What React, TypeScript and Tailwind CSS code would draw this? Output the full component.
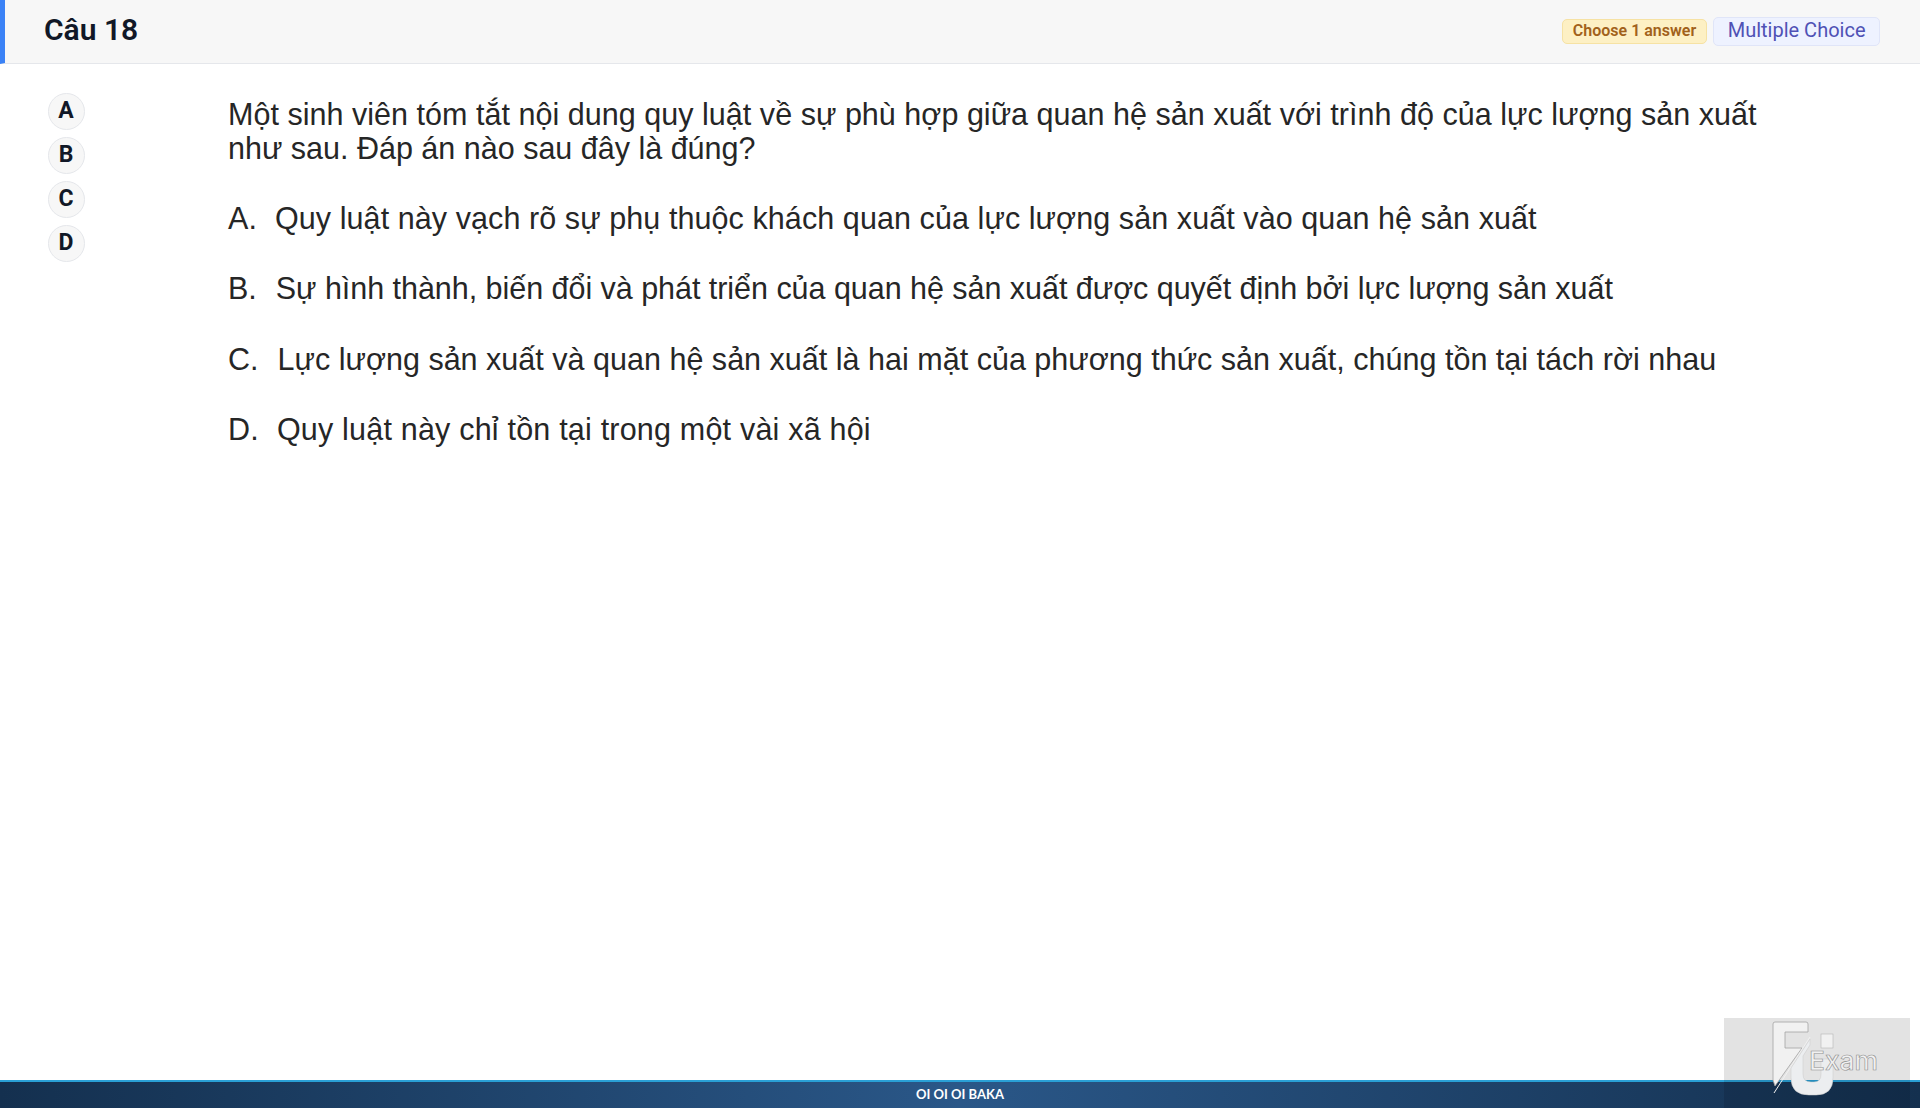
const sans = "font-['Liberation_Sans',Arial,sans-serif]";

const letters = ['A', 'B', 'C', 'D'];

const options = [
  { key: 'A.', line: 'tracking-[0.08px]', gap: 'ml-[18px]', text: 'Quy luật này vạch rõ sự phụ thuộc khách quan của lực lượng sản xuất vào quan hệ sản xuất' },
  { key: 'B.', line: 'tracking-[-0.035px]', gap: 'ml-[19px]', text: 'Sự hình thành, biến đổi và phát triển của quan hệ sản xuất được quyết định bởi lực lượng sản xuất' },
  { key: 'C.', line: 'tracking-[0.015px]', gap: 'ml-[19px]', text: 'Lực lượng sản xuất và quan hệ sản xuất là hai mặt của phương thức sản xuất, chúng tồn tại tách rời nhau' },
  { key: 'D.', line: 'tracking-[0.2px]', gap: 'ml-[18px]', text: 'Quy luật này chỉ tồn tại trong một vài xã hội' },
];

function Logo() {
  return (
    <div className="absolute right-[10px] bottom-0 w-[186px] h-[90px] bg-black/[0.11]">
      <svg width="186" height="90" viewBox="0 0 186 90" fill="none">
        {/* F */}
        <path d="M49 6 Q49 4 51 4 H82 Q84 4 84 6 V14 H61 V30 H78 L51 68 L49 62 Z" fill="#f1f1f1" stroke="#a3a3a3" strokeWidth="0.8" />
        {/* slash */}
        <path d="M86 19 L50 75" stroke="#f1f1f1" strokeWidth="1" />
        {/* U */}
        <path d="M86 21 L67 50 V60 Q67 77 85 77 H92 Q109 77 109 60 V41 H97 V56 Q97 64 90 64 H87 Q79 64 79 56 V38 L86 27 Z" fill="#eceef0" stroke="#c8c8c8" strokeWidth="0.5" />
        <rect x="97" y="16" width="12" height="14" fill="#f1f1f1" stroke="#b5b5b5" strokeWidth="0.6" />
        <text x="85" y="52" fontFamily="'Inter', sans-serif" fontSize="26" fontWeight="500" fill="#f1f1f1" stroke="#8f8f8f" strokeWidth="0.6" textLength="69" lengthAdjust="spacingAndGlyphs">Exam</text>
      </svg>
    </div>
  );
}

export default function App() {
  return (
    <div className="relative min-h-[1108px] bg-white flex flex-col overflow-hidden">
      <header className="h-[64px] flex items-center justify-between bg-[#f7f7f7] border-l-[5px] border-l-[#3b82f6] border-b border-b-[#e5e7eb] pl-[39px] pr-[40px] font-['Roboto',sans-serif]">
        <h1 className="text-[30px] font-semibold text-[#111827] leading-none -mt-[4px]">Câu 18</h1>
        <div className="flex items-center gap-[6px]">
          <span className="h-[25px] flex items-center px-[10px] pb-[2px] rounded-[5px] bg-[#fdf0c4] border border-[#f6e2a4] text-[#a1611b] text-[16px] font-semibold">Choose 1 answer</span>
          <span className="h-[29px] flex items-center px-[13.5px] pb-[3px] rounded-[5px] bg-[#eef2ff] border border-[#e0e5f8] text-[#4f51b5] text-[20px]">Multiple Choice</span>
        </div>
      </header>

      <main className="flex-1 flex pt-[29px]">
        <div className="w-[228px] pl-[48px] flex flex-col gap-[7px] font-['Roboto',sans-serif]">
          {letters.map((l) => (
            <div key={l} className="w-[37px] h-[37px] rounded-full bg-[#f7f7f7] border border-[#e5e7eb] flex items-center justify-center pr-[1px] text-[23px] font-bold text-[#111827]">
              {l}
            </div>
          ))}
        </div>
        <div className={`${sans} text-[#262626] text-[30.5px] pt-[4px]`}>
          <p className="leading-[34px] w-[1600px]">
            <span className="tracking-[0.03px]">Một sinh viên tóm tắt nội dung quy luật về sự phù hợp giữa quan hệ sản xuất với trình độ của lực lượng sản xuất</span>
            <br />
            như sau. Đáp án nào sau đây là đúng?
          </p>
          <div className="mt-[36px] flex flex-col gap-[36.25px]">
            {options.map((o) => (
              <div key={o.key} className={`flex leading-[34px] ${o.line}`}>
                <span>{o.key}</span>
                <span className={o.gap}>{o.text}</span>
              </div>
            ))}
          </div>
        </div>
      </main>

      <footer className="h-[28px] border-t-2 border-t-[#2aa0d6] bg-gradient-to-r from-[#14304f] via-[#2a5788] to-[#14304f] flex items-center justify-center font-['Lato',sans-serif] text-white text-[13px] font-bold">
        OI OI OI BAKA
      </footer>

      <Logo />
    </div>
  );
}
